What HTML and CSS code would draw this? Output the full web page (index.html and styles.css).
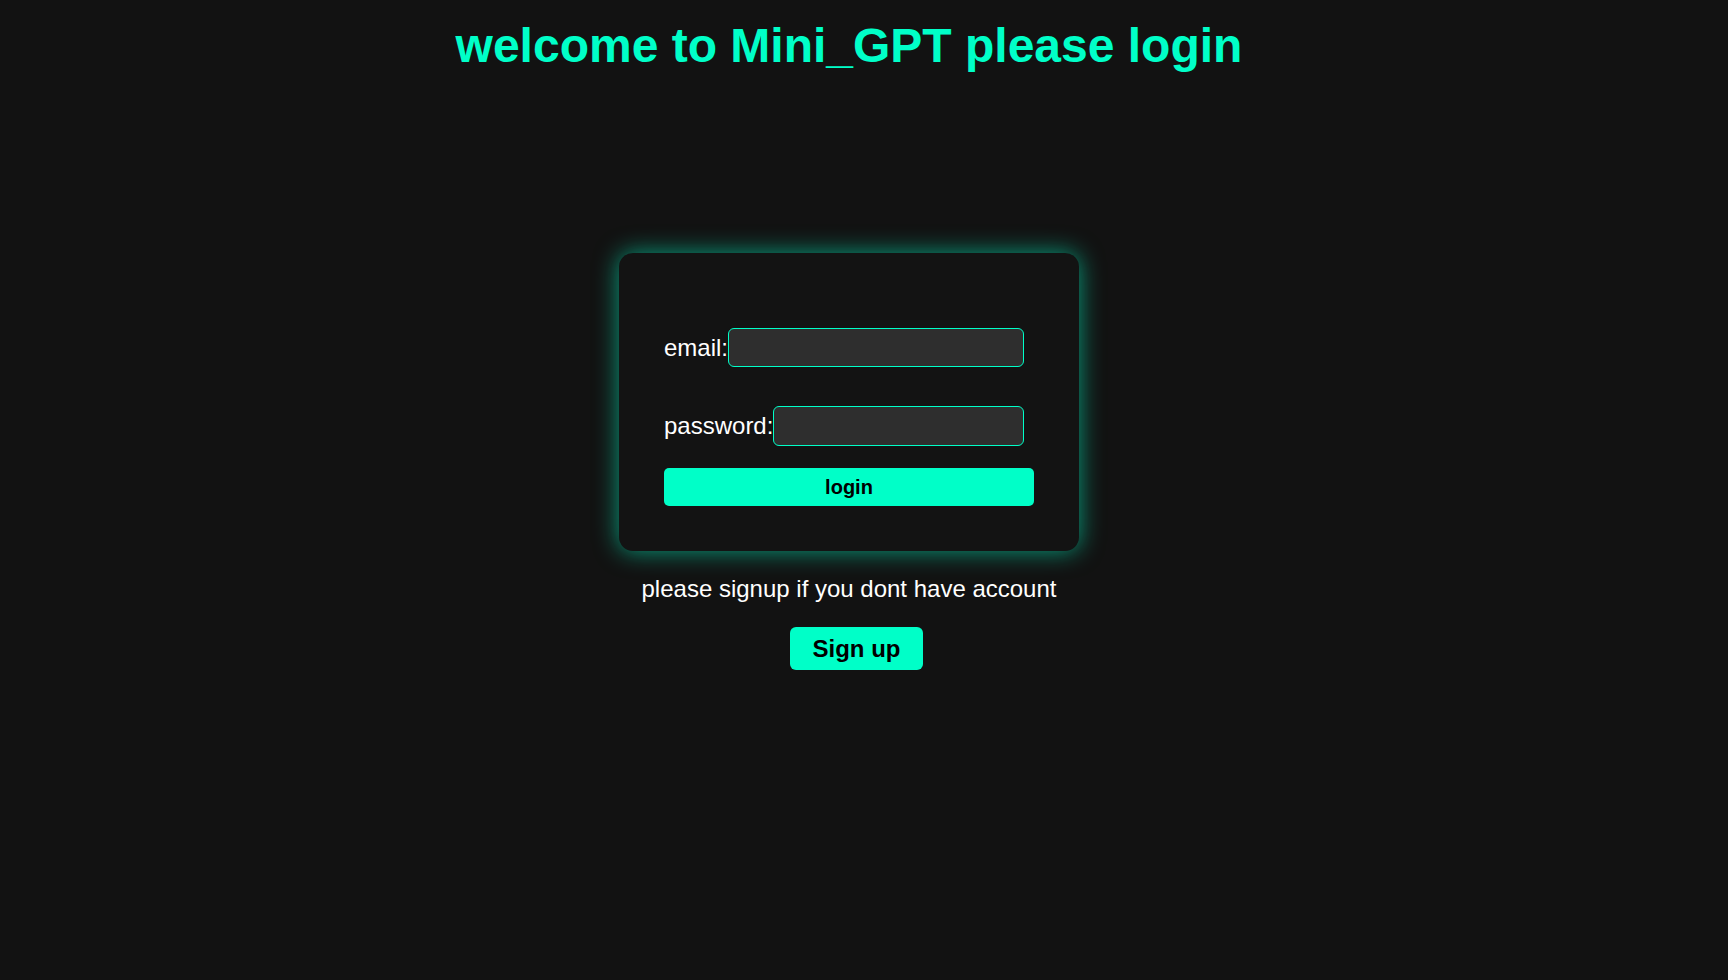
FILE: index.html
```html
<!DOCTYPE html>
<html lang="en">
<head>
<meta charset="utf-8">
<title>Mini_GPT login</title>
<link rel="stylesheet" href="styles.css">
</head>
<body>
<div class="page">
  <h1 class="title">welcome to Mini_GPT please login</h1>
  <form class="card" onsubmit="return false">
    <div class="row">
      <label class="label" for="email">email:</label>
      <input class="field" id="email" type="email">
    </div>
    <div class="row row-pass">
      <label class="label" for="password">password:</label>
      <input class="field" id="password" type="password">
    </div>
    <button class="login" type="submit">login</button>
  </form>
  <p class="hint">please signup if you dont have account</p>
  <button class="signup" type="button">Sign up</button>
</div>
</body>
</html>
```

FILE: styles.css
```css
html, body {
  margin: 0;
  padding: 0;
  background: #121212;
  color: #ffffff;
  font-family: "Liberation Sans", Arial, sans-serif;
}

.page {
  display: flex;
  flex-direction: column;
  align-items: center;
  padding-right: 30px;
  min-height: 980px;
  box-sizing: border-box;
}

.title {
  margin: 18px 0 0;
  font-size: 48px;
  font-weight: bold;
  line-height: 55px;
  color: #00ffc8;
}

.card {
  margin-top: 180px;
  width: 460px;
  box-sizing: border-box;
  padding: 75px 45px 45px;
  background: #131313;
  border-radius: 14px;
  box-shadow: 0 0 24px rgba(0, 255, 200, 0.6);
  display: flex;
  flex-direction: column;
}

.row {
  display: flex;
  align-items: center;
  width: 360px;
  height: 39px;
}

.row-pass {
  margin-top: 39px;
  height: 40px;
}

.label {
  font-size: 24px;
  color: #ffffff;
  white-space: nowrap;
}

.field {
  flex: 1;
  min-width: 0;
  height: 100%;
  box-sizing: border-box;
  margin: 0;
  background: #2e2e2e;
  border: 1px solid #00ffc8;
  border-radius: 6px;
  color: #ffffff;
  font-size: 16px;
  padding: 0 8px;
  outline: none;
}

.login {
  margin-top: 22px;
  width: 370px;
  height: 38px;
  border: none;
  border-radius: 5px;
  background: #00ffc8;
  color: #000000;
  font-family: "Liberation Sans", Arial, sans-serif;
  font-size: 20px;
  font-weight: bold;
  padding: 0;
}

.hint {
  margin: 24px 0 25px;
  font-size: 24px;
  line-height: 27px;
}

.signup {
  margin-left: 15px;
  height: 43px;
  padding: 0 23px;
  border: none;
  border-radius: 6px;
  background: #00ffc8;
  color: #000000;
  font-family: "Liberation Sans", Arial, sans-serif;
  font-size: 24px;
  font-weight: bold;
}
```
